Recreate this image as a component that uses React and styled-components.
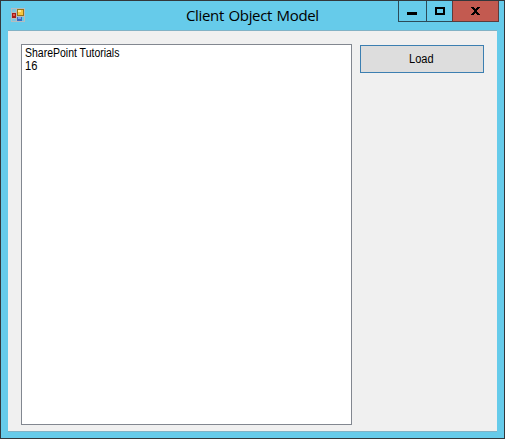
import React from "react";
import styled, { createGlobalStyle } from "styled-components";

const GlobalStyle = createGlobalStyle`
  * { box-sizing: border-box; }
  body { margin: 0; overflow: hidden; }
`;

const Window = styled.main`
  width: 505px;
  height: 439px;
  display: flex;
  flex-direction: column;
  padding: 0 7px 6px;
  border: 1px solid #33373b;
  background: #66cbea;
  color: #000;
`;

const TitleBar = styled.header`
  height: 29px;
  flex: none;
  display: grid;
  grid-template-columns: 14px 1fr 101px;
  align-items: start;
  margin-right: -2px;
  padding-left: 3px;
`;

const AppIcon = styled.svg`
  width: 14px;
  height: 14px;
  margin-top: 7px;
`;

const Title = styled.h1`
  margin: 0;
  padding-left: 161px;
  font: 400 15px/29px "Open Sans", "Noto Sans", sans-serif;
  letter-spacing: -0.33px;
  word-spacing: 0.9px;
  white-space: nowrap;
`;

const Controls = styled.div`
  display: flex;
  height: 21px;
`;

const ControlButton = styled.button`
  width: ${({ $width }) => $width}px;
  height: 21px;
  padding: 0;
  border-style: solid;
  border-width: 0 ${({ $last }) => ($last ? 1 : 0)}px 1px 1px;
  border-color: ${({ $close }) => ($close ? "#5d3b3b" : "#2c4a57")};
  background: ${({ $close }) => ($close ? "#c35a50" : "#66cbea")};
`;

const Glyph = styled.svg`
  display: block;
  width: 100%;
  height: 20px;
`;

const Client = styled.section`
  flex: 1;
  display: flex;
  align-items: flex-start;
  gap: 8px;
  padding: 13px 13px 6px;
  border: solid #82b2c5;
  border-width: 1px 0;
  background: #f0f0f0;
  font: 12px/13px "Liberation Sans", Arial, sans-serif;
`;

const ListBox = styled.ul`
  width: 331px;
  height: 381px;
  flex: none;
  margin: 0;
  padding: 2px 3px;
  border: 1px solid #828790;
  background: #fff;
  list-style: none;
`;

const ListItem = styled.li`
  height: 13px;
  white-space: nowrap;
`;

const NarrowText = styled.span`
  display: inline-block;
  transform: scaleX(${({ $scale }) => $scale});
  transform-origin: ${({ $centered }) => ($centered ? "center" : "left")};
`;

const LoadButton = styled.button`
  width: 124px;
  height: 28px;
  flex: none;
  margin-top: 1px;
  padding: 0 2px 0 0;
  border: 1px solid #3c7fb1;
  background: #ddd;
  color: #000;
  font: inherit;
`;

export default function App() {
  return (
    <>
      <GlobalStyle />
      <Window>
        <TitleBar>
          <AppIcon viewBox="0 0 14 14" shapeRendering="crispEdges">
            <path d="M.5.5h13v13H.5zM5.5.5v13M.5 4.5h5M.5 10.5h5M5.5 8.5h8" fill="none" stroke="#b5bcc0" />
            <path d="M1 1h4v3H1zM1 11h4v2H1z" fill="#7fc5dc" />
            <path d="M1 5h4v5H1z" fill="#a51c18" />
            <path d="M2 6h2v2H2z" fill="#e25a4e" />
            <path d="M6 1h7v7H6z" fill="#9a7415" />
            <path d="M7 2h5v5H7z" fill="#f8c640" />
            <path d="M7 2h3v2H7z" fill="#ffe894" />
            <path d="M6 9h5v4H6z" fill="#3869c3" />
            <path d="M7 9h3v2H7z" fill="#78a5ec" />
          </AppIcon>
          <Title>Client Object Model</Title>
          <Controls>
            <ControlButton $width={28} aria-label="Minimize">
              <Glyph viewBox="0 0 27 20" shapeRendering="crispEdges">
                <path d="M8 11h10v3H8z" />
              </Glyph>
            </ControlButton>
            <ControlButton $width={26} aria-label="Maximize">
              <Glyph viewBox="0 0 25 20" shapeRendering="crispEdges">
                <path fillRule="evenodd" d="M8 6h10v8H8zM10 8v4h6V8z" />
              </Glyph>
            </ControlButton>
            <ControlButton $width={47} $close $last aria-label="Close">
              <Glyph viewBox="0 0 45 20" shapeRendering="crispEdges">
                <path d="M18 6h3v1h1v1h1v-1h1v-1h3v1h-1v1h-1v1h-1v2h1v1h1v1h1v1h-3v-1h-1v-1h-1v1h-1v1h-3v-1h1v-1h1v-1h1v-2h-1v-1h-1v-1h-1z" />
              </Glyph>
            </ControlButton>
          </Controls>
        </TitleBar>
        <Client>
          <ListBox>
            <ListItem><NarrowText $scale={0.874}>SharePoint Tutorials</NarrowText></ListItem>
            <ListItem><NarrowText $scale={0.93}>16</NarrowText></ListItem>
          </ListBox>
          <LoadButton><NarrowText $scale={0.92} $centered>Load</NarrowText></LoadButton>
        </Client>
      </Window>
    </>
  );
}
